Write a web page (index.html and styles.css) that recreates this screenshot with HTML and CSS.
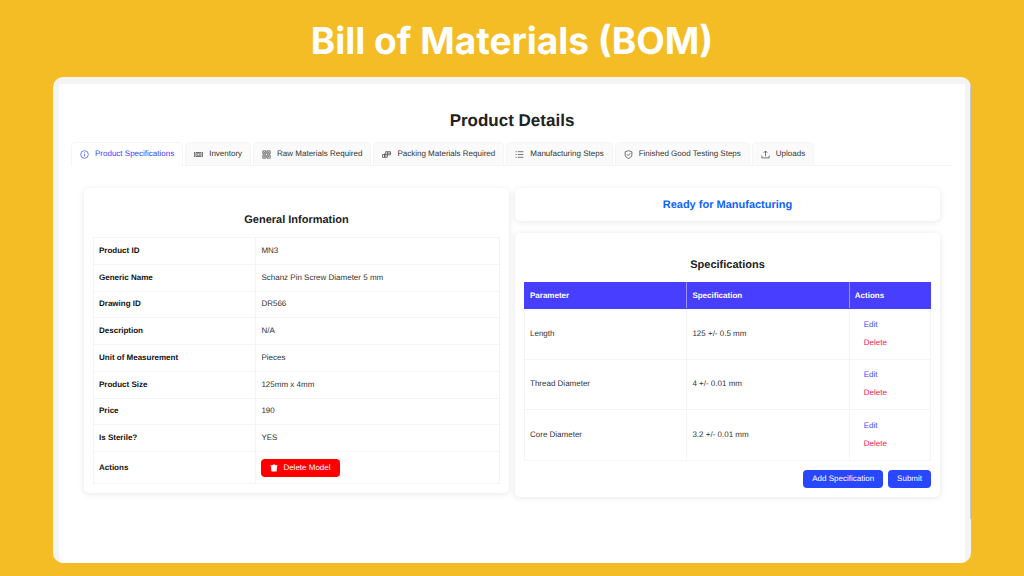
FILE: index.html
```html
<!DOCTYPE html>
<html lang="en">
<head>
<meta charset="utf-8">
<title>Bill of Materials (BOM)</title>
<meta name="viewport" content="width=device-width, initial-scale=1">
<link rel="stylesheet" href="styles.css">
</head>
<body>
<h1 class="banner">Bill of Materials (BOM)</h1>
<main class="frame">
  <div class="page">
    <h2 class="page-title">Product Details</h2>
    <nav class="tabs" role="tablist">
      <button class="tab tab-active" role="tab" aria-selected="true">
        <svg class="icon" viewBox="0 0 16 16"><circle cx="8" cy="8" r="6.8"/><path d="M8 7v4.5M8 4.3v1.4"/></svg>
        Product Specifications</button>
      <button class="tab" role="tab">
        <svg class="icon" viewBox="0 0 16 16"><path d="M1 3.5v9M15 3.5v9M3.5 4v8M12.5 4v8M3.5 4.5h9M3.5 11.5h9"/><circle cx="8" cy="8" r="2.3"/></svg>
        Inventory</button>
      <button class="tab" role="tab">
        <svg class="icon" viewBox="0 0 16 16"><path d="M1.5 1.5h5.5v5.5h-5.5zM9 1.5h5.500v5.5h-5.5zM1.5 9h5.5v5.5h-5.5zM9 9h5.5v5.5h-5.5zM3 4.3h2.5M10.5 4.3h2.5M3 11.8h2.5M10.5 11.8h2.5"/></svg>
        Raw Materials Required</button>
      <button class="tab" role="tab">
        <svg class="icon" viewBox="0 0 16 16"><path d="M6.5 3h8.5v5.5h-8.5zM9.5 3v9.5M1 8h4v5h-4zM5 6v7h4.5M9.5 5.7h5.5"/></svg>
        Packing Materials Required</button>
      <button class="tab" role="tab">
        <svg class="icon" viewBox="0 0 16 16"><path d="M5 3h10M5 8h10M5 13h10M1 3h2M1 8h2M1 13h2"/></svg>
        Manufacturing Steps</button>
      <button class="tab" role="tab">
        <svg class="icon" viewBox="0 0 16 16"><path d="M8 1.2l6 2v5.5c0 3-2.5 4.8-6 6.3c-3.5-1.5-6-3.3-6-6.3v-5.5zM5 7.5l2.5 2.5l4-4.5"/></svg>
        Finished Good Testing Steps</button>
      <button class="tab" role="tab">
        <svg class="icon" viewBox="0 0 16 16"><path d="M8 11v-9M4.8 5l3.2-3.2l3.2 3.2M1.5 10v4h13v-4"/></svg>
        Uploads</button>
    </nav>
    <div class="columns">
      <section class="card">
        <h3 class="card-title">General Information</h3>
        <table class="grid info">
          <tr><th scope="row">Product ID</th><td>MN3</td></tr>
          <tr><th scope="row">Generic Name</th><td>Schanz Pin Screw Diameter 5 mm</td></tr>
          <tr><th scope="row">Drawing ID</th><td>DR566</td></tr>
          <tr><th scope="row">Description</th><td>N/A</td></tr>
          <tr><th scope="row">Unit of Measurement</th><td>Pieces</td></tr>
          <tr><th scope="row">Product Size</th><td>125mm x 4mm</td></tr>
          <tr><th scope="row">Price</th><td>190</td></tr>
          <tr><th scope="row">Is Sterile?</th><td>YES</td></tr>
          <tr class="info-actions"><th scope="row">Actions</th><td>
            <button class="btn btn-danger">
              <svg class="trash" viewBox="0 0 16 16"><path d="M1 2.5h4l1-1.500h4l1 1.500h4v2.200h-14zM2 4.5h12l-.8 10.500h-10.400z"/></svg>
              Delete Model</button>
          </td></tr>
        </table>
      </section>
      <div class="stack">
        <section class="status">Ready for Manufacturing</section>
        <section class="card">
          <h3 class="card-title">Specifications</h3>
          <table class="grid specs">
            <thead><tr><th scope="col">Parameter</th><th scope="col">Specification</th><th scope="col">Actions</th></tr></thead>
            <tbody>
              <tr><td>Length</td><td>125 +/- 0.5 mm</td><td><div class="links"><button class="link">Edit</button><button class="link link-danger">Delete</button></div></td></tr>
              <tr><td>Thread Diameter</td><td>4 +/- 0.01 mm</td><td><div class="links"><button class="link">Edit</button><button class="link link-danger">Delete</button></div></td></tr>
              <tr><td>Core Diameter</td><td>3.2 +/- 0.01 mm</td><td><div class="links"><button class="link">Edit</button><button class="link link-danger">Delete</button></div></td></tr>
            </tbody>
          </table>
          <div class="buttons"><button class="btn">Add Specification</button><button class="btn">Submit</button></div>
        </section>
      </div>
    </div>
  </div>
</main>
</body>
</html>
```
FILE: styles.css
```css
* { box-sizing: border-box; }
body {
  margin: 0;
  min-height: 100vh;
  display: flex;
  flex-direction: column;
  padding: 17px 53px 13px;
  background: #f5bd25;
  color: #333;
  font: 8px/12px "Liberation Sans", Arial, sans-serif;
  text-rendering: geometricPrecision;
}
button {
  font: inherit;
  text-rendering: inherit;
  border: 0;
  margin: 0;
  cursor: pointer;
}
.banner {
  margin: 0 0 12px;
  text-align: center;
  color: #fff;
  font: 700 37px/48px Inter, sans-serif;
}
.frame {
  position: relative;
  flex: 1;
  display: flex;
  padding: 7px 6px 0;
  background: #f4f4f4;
  border-radius: 10px;
  overflow: hidden;
}
/* scroll indicator along the right edge */
.frame::after {
  content: "";
  position: absolute;
  top: 0;
  right: 0;
  width: 1px;
  height: 91%;
  background: #c8c8c8;
}
.page { flex: 1; background: #fff; padding: 27px 12px 24px; }
.page-title {
  margin: 0 0 11px;
  text-align: center;
  font-size: 17px;
  line-height: 20px;
  color: #222;
}
.tabs { display: flex; gap: 2px; border-bottom: 1px solid #f4f4f4; }
.tab {
  display: flex;
  align-items: center;
  gap: 6px;
  height: 23px;
  padding: 0 8px;
  background: #fafafa;
  border: 1px solid #f5f5f5;
  border-bottom: 0;
  border-radius: 5px 5px 0 0;
  color: #333;
  white-space: nowrap;
}
.tab-active {
  height: 24px;
  margin-bottom: -1px;
  padding-bottom: 1px;
  background: #fff;
  color: #3543ff;
}
.icon {
  width: 9px;
  height: 9px;
  fill: none;
  stroke: currentColor;
  stroke-width: 1.2;
}
.columns {
  display: grid;
  grid-template-columns: 1fr 1fr;
  gap: 6px;
  align-items: start;
  padding: 22px 13px 0;
}
.stack { display: grid; gap: 12px; }
.card, .status {
  background: #fff;
  border-radius: 5px;
  box-shadow: 0 1px 6px rgba(0, 0, 0, 0.1);
}
.card { padding: 25px 9px 9px; }
.status {
  padding: 11px 9px 9px;
  text-align: center;
  font-size: 11px;
  line-height: 13px;
  font-weight: 700;
  color: #0d62fe;
}
.card-title {
  margin: 0 0 9px;
  text-align: center;
  font-size: 11px;
  line-height: 15px;
  color: #222;
}
.grid { width: 100%; border-collapse: collapse; table-layout: fixed; }
.grid th, .grid td {
  padding: 0 5px;
  border: 1px solid #f4f4f4;
  text-align: left;
}
.info { height: 247px; }
.info th { width: 40%; color: #111; }
.info-actions { height: 32px; }
.specs { height: 179px; }
.specs thead { height: 26px; }
.specs th {
  width: 40%;
  background: #483eff;
  color: #fff;
  border-color: #483eff;
}
.specs th:not(:last-child) { border-right-color: #9b96ff; }
.specs th:last-child { width: 20%; }
.specs td { height: 50px; }
.links {
  display: flex;
  flex-direction: column;
  align-items: flex-start;
  gap: 6px;
  padding-left: 9px;
}
.link { padding: 0; background: none; color: #3b4cf5; }
.link-danger { color: #f5165f; }
.btn {
  display: inline-flex;
  align-items: center;
  gap: 5px;
  height: 18px;
  padding: 0 9px;
  border-radius: 4px;
  background: #2847ff;
  color: #fff;
}
.btn-danger { background: #f00; }
.trash { width: 8px; height: 8px; fill: currentColor; }
.buttons { display: flex; justify-content: flex-end; gap: 5px; margin-top: 9px; }
```
